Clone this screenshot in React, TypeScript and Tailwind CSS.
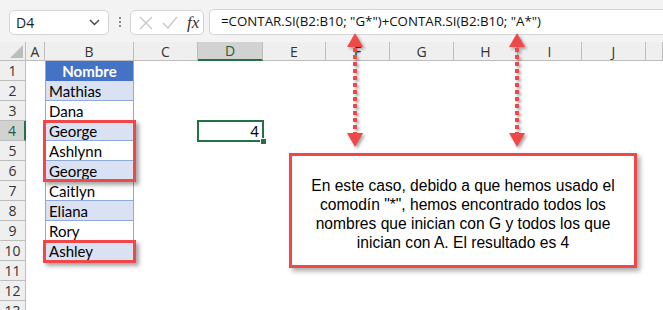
import React from "react";

const cols = ["A", "B", "C", "D", "E", "F", "G", "H", "I", "J", ""];
const names = ["Nombre", "Mathias", "Dana", "George", "Ashlynn", "George", "Caitlyn", "Eliana", "Rory", "Ashley"];
const rows = [1, 2, 3, 4, 5, 6, 7, 8, 9, 10, 11, 12, 13];

const cellFont = { fontFamily: "Lato, 'Open Sans', sans-serif" };
const uiFont = { fontFamily: "'Open Sans', 'Noto Sans', sans-serif" };

function Arrow() {
  return (
    <svg width="18" height="116" viewBox="0 0 18 116" className="drop-shadow-[2px_2px_1.5px_rgba(0,0,0,0.35)]">
      <polygon points="9,0 17,14 1,14" fill="#f04848" />
      <line x1="9" y1="15" x2="9" y2="100" stroke="#f04848" strokeWidth="4" strokeDasharray="4 3" />
      <polygon points="9,114 17,100 1,100" fill="#f04848" />
    </svg>
  );
}

function BodyCell({ row, col }: { row: number; col: string }) {
  if (col === "B" && row <= 10) {
    const name = names[row - 1];
    if (row === 1) {
      return (
        <div className="flex items-center justify-center pt-[1px] bg-[#4472c4] border-x border-[#8ea9db] text-[15px] font-bold text-white" style={cellFont}>
          {name}
        </div>
      );
    }
    return (
      <div
        className={
          row % 2 === 0
            ? "flex items-center pt-[1px] px-[3px] bg-[#d9e1f2] border-x border-b border-[#8ea9db] text-[15px] text-black"
            : "flex items-center pt-[1px] px-[3px] bg-white border-x border-b border-[#8ea9db] text-[15px] text-black"
        }
        style={cellFont}
      >
        {name}
      </div>
    );
  }
  if (col === "D" && row === 4) {
    return (
      <div className="relative flex items-center justify-end pt-[1px] pr-[4px] text-[15px] text-black" style={cellFont}>
        4
        <div className="absolute -left-[1px] -top-[1px] -right-[1px] -bottom-[1px] border-2 border-[#217346]" />
        <div className="absolute -right-[4px] -bottom-[4px] w-[7px] h-[7px] bg-[#217346] border border-white" />
      </div>
    );
  }
  return <div className="bg-white" />;
}

export default function App() {
  return (
    <div className="relative w-[663px] h-[310px] overflow-hidden bg-white">
      {/* toolbar */}
      <div className="h-[42px] bg-[#f3f3f3] flex items-start pt-[9px] pl-[9px]" style={uiFont}>
        <div className="w-[100px] h-[25px] mt-[1px] bg-white border border-[#d4d4d4] rounded-[5px] flex items-center justify-between pl-[6px] pr-[8px] text-[14px] text-[#222]">
          <span>D4</span>
          <svg width="11" height="7" viewBox="0 0 11 7">
            <path d="M1 1l4.5 4.5L10 1" fill="none" stroke="#444" strokeWidth="1.4" />
          </svg>
        </div>
        <div className="w-[21px] h-[25px] flex flex-col items-center justify-center gap-[2px]">
          <span className="w-[2px] h-[2px] bg-[#888]" />
          <span className="w-[2px] h-[2px] bg-[#888]" />
          <span className="w-[2px] h-[2px] bg-[#888]" />
        </div>
        <div className="w-[74px] h-[25px] mt-[1px] bg-white border border-[#d4d4d4] rounded-[5px] flex items-center pl-[8px] gap-[9px]">
          <svg width="14" height="14" viewBox="0 0 14 14">
            <path d="M1 1l12 12M13 1L1 13" stroke="#c6c6c6" strokeWidth="1.2" />
          </svg>
          <svg width="16" height="13" viewBox="0 0 16 13">
            <path d="M1 7l5 5L15 1" fill="none" stroke="#c6c6c6" strokeWidth="1.2" />
          </svg>
          <span className="text-[17px] italic text-[#333] leading-none" style={{ fontFamily: "'Liberation Serif', serif" }}>
            fx
          </span>
        </div>
        <div className="ml-[5px] flex-1 h-[26px] bg-white border-y border-l border-[#d4d4d4] rounded-l-[5px] flex items-center pl-[11px] text-[13.3px] text-[#111]">
          =CONTAR.SI(B2:B10; "G*")+CONTAR.SI(B2:B10; "A*")
        </div>
      </div>

      {/* sheet grid */}
      <div className="grid grid-cols-[26px_19px_89px_64px_65px_63px_64px_64px_64px_64px_64px_1fr] grid-rows-[19px_repeat(13,20px)]">
        <div className="bg-[#efefef] border-r border-b border-[#bdbdbd] flex items-end justify-end p-[2px]">
          <svg width="13" height="13" viewBox="0 0 13 13">
            <polygon points="13,0 13,13 0,13" fill="#bdbdbd" />
          </svg>
        </div>
        {cols.map((c, i) => (
          <div
            key={"h" + i}
            className={
              c === "D"
                ? "bg-[#d2d2d2] border-r border-[#bdbdbd] border-b-2 border-b-[#217346] flex items-center justify-center text-[14px] text-[#1d5e3a]"
                : "bg-[#efefef] border-r border-b border-[#bdbdbd] flex items-center justify-center text-[14px] text-[#333]"
            }
            style={uiFont}
          >
            {c}
          </div>
        ))}
        {rows.map((r) => (
          <React.Fragment key={r}>
            <div
              className={
                r === 4
                  ? "bg-[#d2d2d2] border-r-2 border-r-[#217346] border-b border-b-[#bdbdbd] flex items-center justify-center text-[14px] text-[#1d5e3a]"
                  : "bg-[#efefef] border-r border-b border-[#bdbdbd] flex items-center justify-center text-[14px] text-[#333]"
              }
              style={uiFont}
            >
              {r}
            </div>
            {cols.map((c, i) => (
              <BodyCell key={r + "-" + i} row={r} col={c} />
            ))}
          </React.Fragment>
        ))}
      </div>

      {/* red highlight boxes */}
      <div className="absolute left-[43px] top-[120px] w-[93px] h-[62px] border-[3px] border-[#f04848] shadow-[3px_3px_4px_rgba(0,0,0,0.35)]" />
      <div className="absolute left-[43px] top-[240px] w-[93px] h-[23px] border-[3px] border-[#f04848] shadow-[3px_3px_4px_rgba(0,0,0,0.35)]" />

      {/* arrows */}
      <div className="absolute left-[346px] top-[33px]">
        <Arrow />
      </div>
      <div className="absolute left-[508px] top-[33px]">
        <Arrow />
      </div>

      {/* callout */}
      <div
        className="absolute left-[289px] top-[153px] w-[348px] h-[115px] bg-white border-[3px] border-[#f04848] shadow-[3px_3px_5px_rgba(0,0,0,0.35)] flex items-center justify-center pt-[6px] text-center text-[15.6px] leading-[19px] text-black"
        style={{ fontFamily: "'Liberation Sans', Arial, sans-serif" }}
      >
        <p>
          En este caso, debido a que hemos usado el
          <br />
          comodín "*", hemos encontrado todos los
          <br />
          nombres que inician con G y todos los que
          <br />
          inician con A. El resultado es 4
        </p>
      </div>
    </div>
  );
}
